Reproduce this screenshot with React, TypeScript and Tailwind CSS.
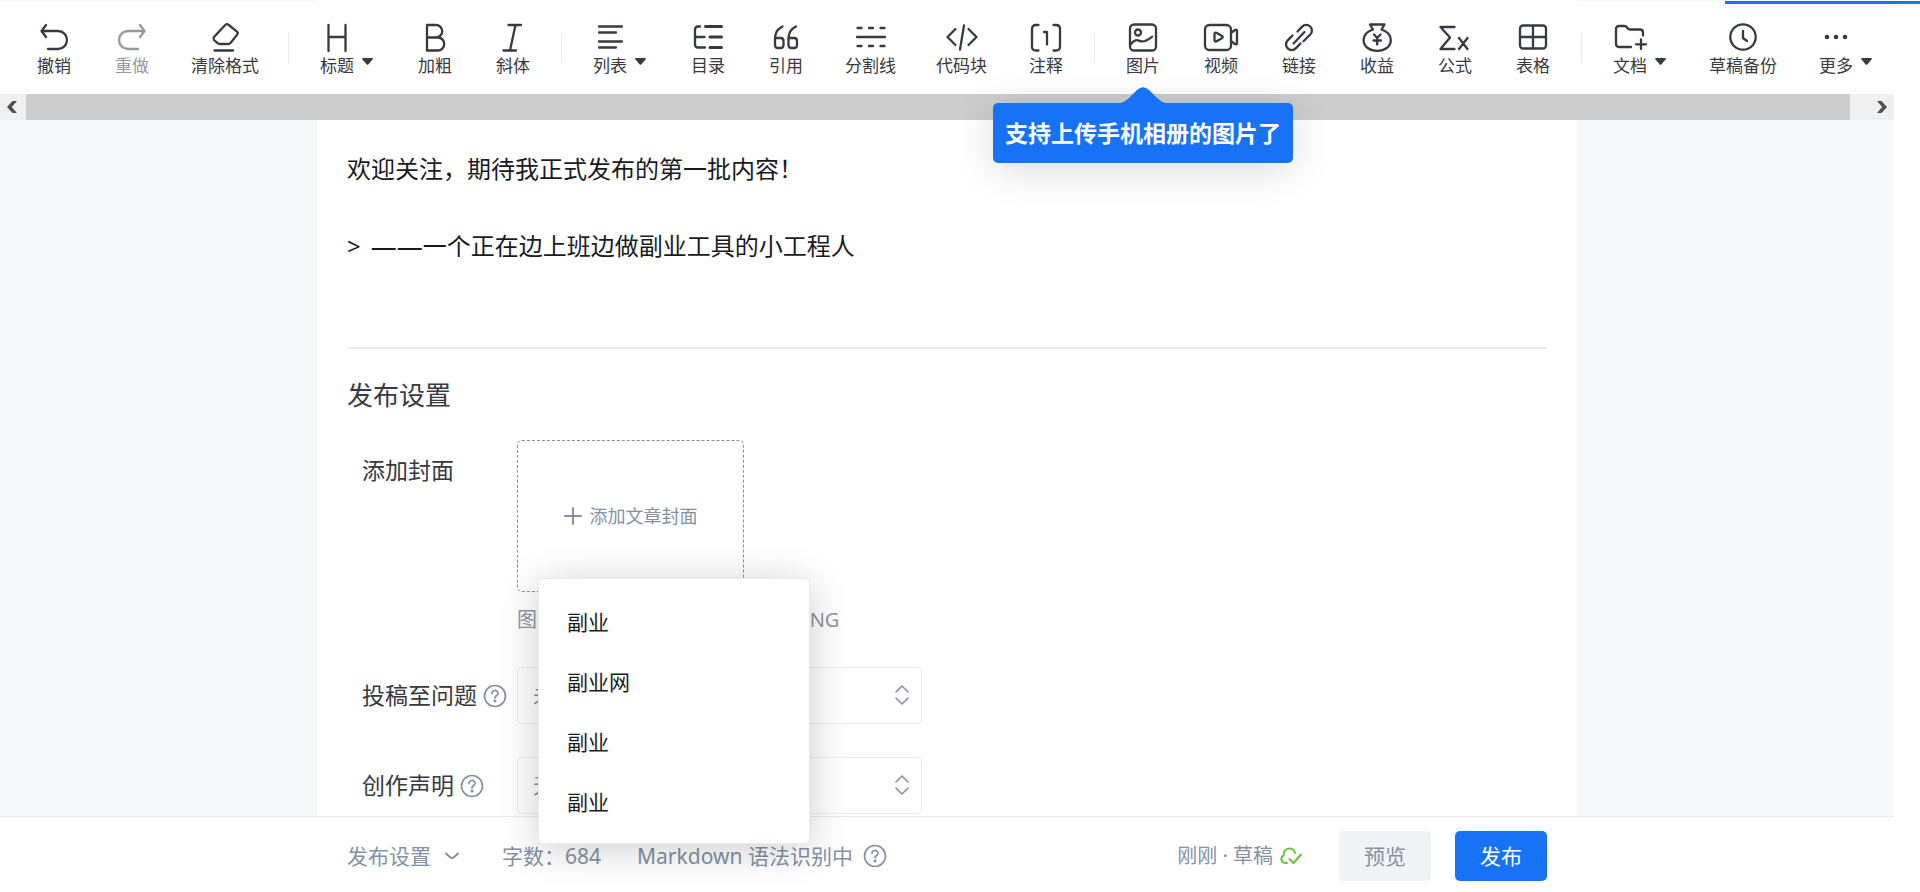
import React from "react";

type Glyph = { d: string; w?: number };

function Icon({ paths, children }: { paths: Glyph[]; children?: React.ReactNode }) {
  return (
    <svg
      viewBox="0 0 28 28"
      className="h-7 w-7 overflow-visible"
      fill="none"
      stroke="currentColor"
      strokeWidth={2.3}
      strokeLinecap="round"
      strokeLinejoin="round"
      aria-hidden="true"
    >
      {paths.map((p) => (
        <path key={p.d} d={p.d} strokeWidth={p.w ?? 2.3} />
      ))}
      {children}
    </svg>
  );
}

const icons = {
  undo: <Icon paths={[{ d: "M6 2L1.5 8L6 14M1.5 8H18A9 9 0 0 1 18 26H8" }]} />,
  redo: <Icon paths={[{ d: "M22 2L26.500 8L22 14M26.500 8H10A9 9 0 0 0 10 26H20" }]} />,
  eraser: (
    <Icon
      paths={[
        { d: "M14.200 2Q16 .3 17.800 2L26 8.600Q27.400 10 26.200 11.600L19.500 20Q18.600 21 17.300 21H8.700Q7.500 21 6.600 20.200L3 17Q1.800 15.500 3 14Z" },
        { d: "M3.500 27.500H22" },
      ]}
    />
  ),
  heading: <Icon paths={[{ d: "M5.500 2V28M22.500 2V28M5.500 14H22.500" }]} />,
  bold: <Icon paths={[{ d: "M6 14.500H15A6.200 6.200 0 0 0 15 2H6V27.500H17A6.200 6.500 0 0 0 17 14.500H15" }]} />,
  italic: <Icon paths={[{ d: "M9.500 2H22M4.500 27.500H17M16.500 2L11 27.500" }]} />,
  list: <Icon paths={[{ d: "M3 3.500H26M3 9.500H20M3 18.500H26M3 24.500H20" }]} />,
  toc: (
    <Icon
      paths={[
        { d: "M6 3.500H4Q1 3.500 1 6.500V21.500Q1 24.500 4 24.500H11M1 14H10.500" },
        { d: "M11.500 3.500H27.500M16 14H27.500M16 24.500H27.500", w: 3 },
      ]}
    />
  ),
  quote: (
    <Icon
      paths={[
        { d: "M10.500 3.500C5 6 3 11 3 16V22Q3 25 6 25H8.500Q11.500 25 11.500 22V18Q11.500 15 8.500 15H3" },
        { d: "M24 3.500C18.500 6 16.500 11 16.500 16V22Q16.500 25 19.500 25H22Q25 25 25 22V18Q25 15 22 15H16.500" },
      ]}
    />
  ),
  divider: <Icon paths={[{ d: "M0 14H28M.5 5H4.500M12 5H16M23.500 5H27.500M.5 23H4.500M12 23H16M23.500 23H27.500" }]} />,
  code: <Icon paths={[{ d: "M7.500 6L-.5 14L7.500 22M20.500 6L28.500 14L20.500 22M16 2.500L12 26.500" }]} />,
  note: (
    <Icon
      paths={[
        { d: "M6.500 2H4Q0 2 0 6V23.500Q0 27.500 4 27.500H6.500M21.500 2H24Q28 2 28 6V23.500Q28 27.500 24 27.500H21.500M12 9H15V21.500" },
      ]}
    />
  ),
  image: (
    <Icon paths={[{ d: "M1.500 21.500C6 15 9 17.500 12 18.300S18 17.500 23 13.800" }]}>
      <rect x="1" y="1.500" width="26" height="26" rx="4" />
      <circle cx="9" cy="9.500" r="3" />
    </Icon>
  ),
  video: (
    <Icon
      paths={[
        { d: "M24.500 9.500L28 7Q30 6 30 8V20Q30 22 28 21L24.500 18.500" },
        { d: "M7.500 11Q7.500 9 9.500 9.800L15 13Q16.500 14 15 15.200L9.500 18.300Q7.500 19 7.500 17Z" },
      ]}
    >
      <rect x="-2" y="2" width="26" height="25" rx="4.500" />
    </Icon>
  ),
  link: (
    <Icon
      paths={[
        { d: "M12.500 8.500L17.200 3.600A5.650 5.650 0 0 1 25.300 11.500L18.500 18.300M7.500 12.500L2.700 17.400A5.650 5.650 0 0 0 10.700 25.400L15.500 20.500M8.500 20.500L19.500 9" },
      ]}
    />
  ),
  money: (
    <Icon
      paths={[
        { d: "M7 1.500H21.500L18.500 6.500C24.500 8.500 27.800 12.500 27.800 17C27.800 24 21.500 27.800 14.200 27.800S.6 24 .6 17C.6 12.500 4 8.500 10 6.500Z" },
        { d: "M11 11.500L14.200 15L17.500 11.500M14.200 15V21.500M10.500 17.500H18" },
      ]}
    />
  ),
  formula: <Icon paths={[{ d: "M13.500 4H-.5L9 14.500L-.5 26H13.500M18 15L26.500 26M26.500 15L18 26" }]} />,
  table: (
    <Icon paths={[{ d: "M14 3V25M1 14H27" }]}>
      <rect x="1" y="2.500" width="26" height="23" rx="3" />
    </Icon>
  ),
  doc: (
    <Icon
      paths={[{ d: "M15 24H3Q0 24 0 21V6Q0 3 3 3H8.500Q10 3 11 4.500T13.500 6.500H24Q27 6.500 27 9.500V12.500M25 16.500V26M20 21.300H30" }]}
    />
  ),
  backup: (
    <Icon paths={[{ d: "M14 8V15L18 18" }]}>
      <circle cx="14" cy="14" r="12.700" />
    </Icon>
  ),
  more: (
    <svg viewBox="0 0 28 28" className="h-7 w-7" fill="currentColor" aria-hidden="true">
      <circle cx="5" cy="14" r="2.300" />
      <circle cx="14" cy="14" r="2.300" />
      <circle cx="23" cy="14" r="2.300" />
    </svg>
  ),
};

type Tool = { label: string; icon: keyof typeof icons; menu?: boolean; disabled?: boolean; tip?: string };

const groups: Tool[][] = [
  [
    { label: "撤销", icon: "undo" },
    { label: "重做", icon: "redo", disabled: true },
    { label: "清除格式", icon: "eraser" },
  ],
  [
    { label: "标题", icon: "heading", menu: true },
    { label: "加粗", icon: "bold" },
    { label: "斜体", icon: "italic" },
  ],
  [
    { label: "列表", icon: "list", menu: true },
    { label: "目录", icon: "toc" },
    { label: "引用", icon: "quote" },
    { label: "分割线", icon: "divider" },
    { label: "代码块", icon: "code" },
    { label: "注释", icon: "note" },
  ],
  [
    { label: "图片", icon: "image", tip: "支持上传手机相册的图片了" },
    { label: "视频", icon: "video" },
    { label: "链接", icon: "link" },
    { label: "收益", icon: "money" },
    { label: "公式", icon: "formula" },
    { label: "表格", icon: "table" },
  ],
  [
    { label: "文档", icon: "doc", menu: true },
    { label: "草稿备份", icon: "backup" },
    { label: "更多", icon: "more", menu: true },
  ],
];

function ToolButton({ tool }: { tool: Tool }) {
  return (
    <div className="relative shrink-0">
      <button
        type="button"
        disabled={tool.disabled}
        className={
          (tool.disabled ? "text-[#999999] " : "text-[#373a40] ") +
          (tool.menu ? "pr-[23px] pl-[22px] " : "min-w-[78px] px-5 ") +
          "flex items-start justify-center gap-2"
        }
      >
        <span className="flex flex-col items-center gap-[5px]">
          {icons[tool.icon]}
          <span className="text-[17px] leading-5 whitespace-nowrap">{tool.label}</span>
        </span>
        {tool.menu && (
          <svg viewBox="0 0 11 7" className="mt-[35px] h-[7px] w-[11px]" fill="currentColor" aria-hidden="true">
            <path d="M1 0H10Q11.500 .3 10.500 1.500L6.500 6.300Q5.500 7.300 4.500 6.300L.5 1.500Q-.5 .3 1 0Z" />
          </svg>
        )}
      </button>
      {tool.tip && (
        <div
          role="tooltip"
          className="absolute top-20 left-1/2 z-20 flex h-[60px] w-[300px] -translate-x-1/2 items-center justify-center rounded-[5px] bg-[#1772f6] text-[23px] font-bold whitespace-nowrap text-white shadow-[0_6px_40px_rgba(0,0,0,0.15)]"
        >
          <svg viewBox="0 0 44 16" className="absolute -top-4 left-1/2 h-4 w-11 -translate-x-1/2" fill="#1772f6" aria-hidden="true">
            <path d="M0 16Q4 15 8 11L16 3Q22 -2.500 28 3L36 11Q40 15 44 16Z" />
          </svg>
          {tool.tip}
        </div>
      )}
    </div>
  );
}

function Help() {
  return (
    <svg viewBox="0 0 24 24" className="h-6 w-6 shrink-0" fill="none" stroke="#8491a5" strokeWidth={1.700} strokeLinecap="round" strokeLinejoin="round" aria-hidden="true">
      <circle cx="12" cy="12" r="10.500" />
      <path d="M9 9.500C9 5.500 15 5.500 15 9.300C15 11.500 12 11.500 12 14" />
      <circle cx="12" cy="17" r=".7" fill="#8491a5" />
    </svg>
  );
}

function SelectRow({ id, label, value }: { id: string; label: string; value: string }) {
  return (
    <div className="flex h-[57px] items-center">
      <div className="flex w-[155px] shrink-0 items-center gap-1.5 text-[23px]">
        <label htmlFor={id} className="whitespace-nowrap">{label}</label>
        <Help />
      </div>
      <div className="relative h-full w-[405px]">
        <select
          id={id}
          defaultValue={value}
          className="h-full w-full appearance-none rounded-[5px] border border-[#ebebeb] bg-white pl-[15px] text-[21px] text-[#8491a5]"
        >
          <option>{value}</option>
        </select>
        <svg viewBox="0 0 14 20" className="pointer-events-none absolute top-[18px] right-[13px] h-5 w-3.5" fill="none" stroke="#8491a5" strokeWidth={1.600} strokeLinecap="round" strokeLinejoin="round" aria-hidden="true">
          <path d="M1 7L7 1L13 7M1 13L7 19L13 13" />
        </svg>
      </div>
    </div>
  );
}

export default function App() {
  return (
    <div className="relative flex h-screen flex-col overflow-hidden bg-white font-['Noto_Sans','Noto_Sans_CJK_SC',sans-serif] text-[#373a40]">
      <header className="relative z-10">
        <div className="flex h-px justify-between pr-[26px]">
          <span className="w-[317px] bg-[#f7f8fa]" />
          <span className="w-[317px] bg-[#f7f8fa]" />
        </div>
        <div className="absolute top-px right-0 h-[3px] w-[195px] bg-[#1772f6]" />
        <div role="toolbar" aria-label="编辑工具" className="flex h-[93px] items-start pt-[22px] pl-[15px]">
          {groups.map((group, i) => (
            <React.Fragment key={group[0].label}>
              {i > 0 && <span className="mx-[9px] mt-2.5 h-[30px] w-px shrink-0 bg-[#ebebeb]" />}
              {group.map((tool) => (
                <ToolButton key={tool.label} tool={tool} />
              ))}
            </React.Fragment>
          ))}
        </div>
      </header>

      <div className="mr-[26px] flex h-[26px] shrink-0 bg-[#f0f0f0]">
        <button type="button" aria-label="向左滚动" className="flex w-[26px] items-center pl-[7px]">
          <svg viewBox="0 0 10 12" className="h-3 w-2.5" fill="#505050" aria-hidden="true">
            <path d="M5.500 0H10L4.800 6L10 12H5.500L0 6Z" />
          </svg>
        </button>
        <span className="flex-1 bg-[#cdcdcd]" />
        <button type="button" aria-label="向右滚动" className="flex w-11 items-center justify-end pr-[7px]">
          <svg viewBox="0 0 10 12" className="h-3 w-2.5" fill="#505050" aria-hidden="true">
            <path d="M4.500 0H0L5.200 6L0 12H4.500L10 6Z" />
          </svg>
        </button>
      </div>

      <main className="mr-[26px] min-h-0 flex-1 overflow-hidden bg-[#f7f8fa]">
        <div className="mx-auto min-h-full max-w-[1260px] bg-white px-[30px] pt-[31px]">
          <div className="text-2xl leading-9 text-[#191b1f]">
            <p>欢迎关注，期待我正式发布的第一批内容！</p>
            <p className="mt-[41px] flex items-center">
              <span className="mr-2.5">&gt;</span>
              <span className="text-[26px]">——</span>
              <span>一个正在边上班边做副业工具的小工程人</span>
            </p>
          </div>
          <section className="mt-[83px] border-t-2 border-[#ebebeb] pt-7">
            <h2 className="text-[26px] leading-9">发布设置</h2>
            <div className="mt-[27px] flex pl-[15px]">
              <div className="w-[155px] shrink-0 pt-[15px] text-[23px] leading-[30px]">添加封面</div>
              <div>
                <button type="button" className="flex h-[152px] w-[227px] items-center justify-center gap-2 rounded-[5px] border border-dashed border-[#8491a5] text-lg text-[#8491a5]">
                  <svg viewBox="0 0 18 18" className="h-[18px] w-[18px]" stroke="#8491a5" strokeWidth={2} strokeLinecap="round" aria-hidden="true">
                    <path d="M9 1V17M1 9H17" />
                  </svg>
                  添加文章封面
                </button>
                <p className="mt-3 text-xl leading-8 text-[#9196a1]">图片上传格式支持 JPEG、JPG、PNG</p>
              </div>
            </div>
            <div className="mt-[31px] flex flex-col gap-[33px] pl-[15px]">
              <SelectRow id="question" label="投稿至问题" value="未选择" />
              <SelectRow id="statement" label="创作声明" value="无声明" />
            </div>
          </section>
        </div>
      </main>

      <footer className="mr-[26px] h-[76px] shrink-0 border-t border-[#ebebeb] bg-white">
        <div className="mx-auto flex h-full max-w-[1260px] items-center px-[30px] pt-0.5 text-[21px] leading-8 text-[#8491a5]">
          <button type="button" className="flex items-center gap-3.5">
            发布设置
            <svg viewBox="0 0 14 8" className="h-2 w-3.5" fill="none" stroke="#8491a5" strokeWidth={2} strokeLinecap="round" strokeLinejoin="round" aria-hidden="true">
              <path d="M1 1.500Q5.500 6 7 6T13 1.500" />
            </svg>
          </button>
          <span className="ml-[43px]">字数：684</span>
          <span className="ml-9">Markdown 语法识别中</span>
          <span className="ml-2.5">
            <Help />
          </span>
          <span className="ml-auto text-xl">刚刚 · 草稿</span>
          <svg viewBox="0 0 22 18" className="ml-[7px] h-[18px] w-[22px]" fill="none" stroke="#67c23a" strokeWidth={2} strokeLinecap="round" strokeLinejoin="round" aria-hidden="true">
            <path d="M7 16H5A4 4 0 0 1 3.500 8.500C3.500 0 13.500 -.5 15 6M9.500 12L13.500 16L21 7.500" />
          </svg>
          <button type="button" className="ml-[37px] h-[50px] w-[92px] rounded-[5px] bg-[#f2f3f5]">预览</button>
          <button type="button" className="ml-6 h-[50px] w-[92px] rounded-[5px] bg-[#1772f6] text-white">发布</button>
        </div>
      </footer>

      <ul className="absolute bottom-12 left-[538px] z-20 w-[272px] rounded-[5px] border border-[#ebebeb] bg-white pt-3.5 pb-2.5 text-[21px] text-[#191b1f] shadow-[0_5px_40px_rgba(0,0,0,0.2)]">
        {["副业", "副业网", "副业", "副业"].map((name, i) => (
          <li key={i}>
            <button type="button" className="h-[60px] w-full px-7 text-left">{name}</button>
          </li>
        ))}
      </ul>
    </div>
  );
}
